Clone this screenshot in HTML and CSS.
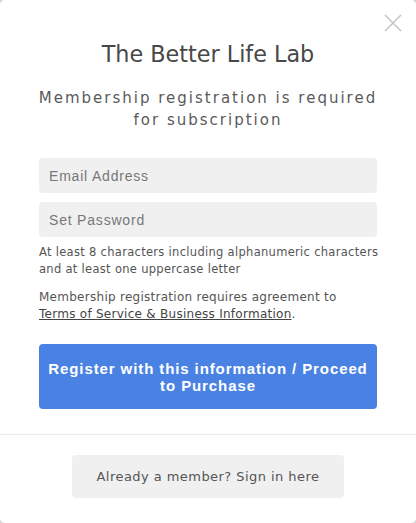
FILE: index.html
```html
<!DOCTYPE html>
<html>
<head>
<meta charset="utf-8">
<link rel="stylesheet" href="styles.css">
</head>
<body>
<div class="modal">
  <button class="close" aria-label="close">
    <svg width="18" height="18" viewBox="0 0 18 18"><path d="M1 1L17 17M17 1L1 17" stroke="#c4c4c4" stroke-width="1.5" fill="none"/></svg>
  </button>
  <div class="main">
    <h1 class="title">The Better Life Lab</h1>
    <p class="subtitle">Membership registration is required for subscription</p>
    <div class="fields">
      <div class="field">Email Address</div>
      <div class="field">Set Password</div>
    </div>
    <p class="hint">At least 8 characters including alphanumeric characters and at least one uppercase letter</p>
    <p class="terms">Membership registration requires agreement to <a href="#">Terms of Service &amp; Business Information</a>.</p>
    <button class="primary">Register with this information / Proceed to Purchase</button>
  </div>
  <div class="footer">
    <button class="secondary">Already a member? Sign in here</button>
  </div>
</div>
</body>
</html>
```
FILE: styles.css
```css
html, body { margin: 0; padding: 0; background: #d8d8d8; }
body { width: 416px; height: 523px; overflow: hidden; }
.modal {
  position: relative;
  box-sizing: border-box;
  width: 416px; height: 523px;
  background: #fff;
  border-radius: 5px;
  font-family: "DejaVu Sans", Verdana, sans-serif;
  color: #444;
}
.close {
  position: absolute; top: 14px; right: 14px;
  border: 0; background: none; padding: 0; width: 18px; height: 18px;
}
.close svg { display: block; }
.main { padding: 40px 39px 25px 39px; display: flex; flex-direction: column; }
.title {
  margin: 0; font-weight: normal; font-size: 22.3px; line-height: 28px;
  text-align: center; color: #484848;
}
.subtitle {
  margin: 19px -8px 27px; font-size: 15px; line-height: 22px; letter-spacing: 2px;
  text-align: center; color: #5a5a5a;
}
.fields { display: flex; flex-direction: column; gap: 9px; }
.field {
  height: 35px; box-sizing: border-box; background: #f0f0f0; border-radius: 4px;
  padding: 0 10px; display: flex; align-items: center;
  font-family: "Liberation Sans", Arial, sans-serif; font-size: 14px; color: #777;
  letter-spacing: 0.8px;
}
.hint { margin: 7px -8px 11px 0; font-size: 11.5px; line-height: 17px; letter-spacing: 0.3px; color: #555; }
.terms { margin: 0 0 21px; font-size: 12px; line-height: 17px; letter-spacing: 0.27px; color: #555; }
.terms a { color: #444; text-decoration: underline; }
.primary {
  border: 0; border-radius: 4px; background: #4a82e4; color: #fff;
  font-family: "Liberation Sans", Arial, sans-serif; font-weight: bold; font-size: 15px;
  letter-spacing: 0.9px; line-height: 17px; height: 65px; padding: 0 8px;
}
.footer { border-top: 1px solid #ebebeb; display: flex; justify-content: center; padding-top: 20px; }
.secondary {
  border: 0; border-radius: 4px; background: #f0f0f0; color: #555;
  width: 272px; height: 43px;
  font-family: "DejaVu Sans", Verdana, sans-serif; font-size: 13px; letter-spacing: 0.45px;
}
```
